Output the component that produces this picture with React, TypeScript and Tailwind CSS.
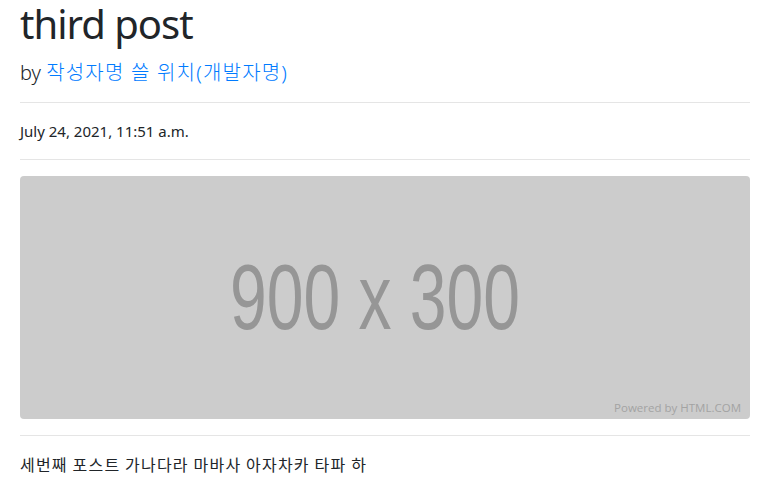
import React from "react";

export default function App() {
  return (
    <div className="min-h-[495px] bg-white pl-5 pr-[23px] text-[#212529]">
      <div className="font-['Noto_Sans','Noto_Sans_CJK_KR',sans-serif]">
        <h1 className="mb-2 pt-[2px] -mt-[2px] text-[40px] font-normal leading-[48px] tracking-[-1px]">third post</h1>
        <p className="text-[20px] font-light leading-[30px] pt-[2px] -mb-[2px]">
          by{" "}
          <a className="text-[#007bff] tracking-[1.2px]">
            작성자명 쓸 위치(개발자명)
          </a>
        </p>
        <hr className="my-4 border-t border-black/10" />
        <p className="mb-4 text-[15px] leading-6">July 24, 2021, 11:51 a.m.</p>
        <hr className="my-4 border-t border-black/10" />
        <div className="relative h-[243px] w-full overflow-hidden rounded bg-[#cccccc]">
          <svg viewBox="0 0 730 243" className="absolute inset-0 h-full w-full">
            <text
              x="355"
              y="153"
              textAnchor="middle"
              fill="#969696"
              fontSize="92"
              fontFamily="'Liberation Sans', Arial, sans-serif"
              textLength="290"
              lengthAdjust="spacingAndGlyphs"
            >
              900 x 300
            </text>
          </svg>
          <span className="absolute bottom-[6px] right-[9px] text-[11.5px] leading-none text-[#a3a3a3] font-['Open_Sans',sans-serif]">
            Powered by HTML.COM
          </span>
        </div>
        <hr className="my-4 border-t border-black/10" />
        <p className="text-[16px] leading-6 tracking-[1.2px] font-['Noto_Sans_CJK_KR',sans-serif]">
          세번째 포스트 가나다라 마바사 아자차카 타파 하
        </p>
      </div>
    </div>
  );
}
